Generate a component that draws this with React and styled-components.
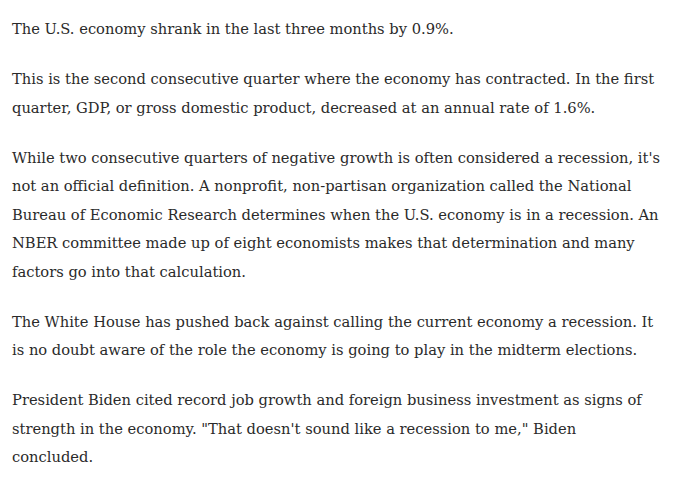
import React from "react";
import styled, { createGlobalStyle } from "styled-components";

const Global = createGlobalStyle`
  html, body { margin: 0; padding: 0; background: #ffffff; }
`;

const Article = styled.article`
  padding: 15px 0 0 12px;
  font-family: "DejaVu Serif", "Liberation Serif", serif;
  font-size: 14.7px;
  line-height: 28.5px;
  color: #2a2a2a;
  white-space: nowrap;
`;

const Para = styled.p`
  margin: 0 0 21.5px 0;
`;

export default function App() {
  return (
    <>
      <Global />
      <Article>
        <Para>The U.S. economy shrank in the last three months by 0.9%.</Para>
        <Para>
          This is the second consecutive quarter where the economy has contracted. In the first
          <br />
          quarter, GDP, or gross domestic product, decreased at an annual rate of 1.6%.
        </Para>
        <Para>
          While two consecutive quarters of negative growth is often considered a recession, it's
          <br />
          not an official definition. A nonprofit, non-partisan organization called the National
          <br />
          Bureau of Economic Research determines when the U.S. economy is in a recession. An
          <br />
          NBER committee made up of eight economists makes that determination and many
          <br />
          factors go into that calculation.
        </Para>
        <Para>
          The White House has pushed back against calling the current economy a recession. It
          <br />
          is no doubt aware of the role the economy is going to play in the midterm elections.
        </Para>
        <Para>
          President Biden cited record job growth and foreign business investment as signs of
          <br />
          strength in the economy. "That doesn't sound like a recession to me," Biden
          <br />
          concluded.
        </Para>
      </Article>
    </>
  );
}
